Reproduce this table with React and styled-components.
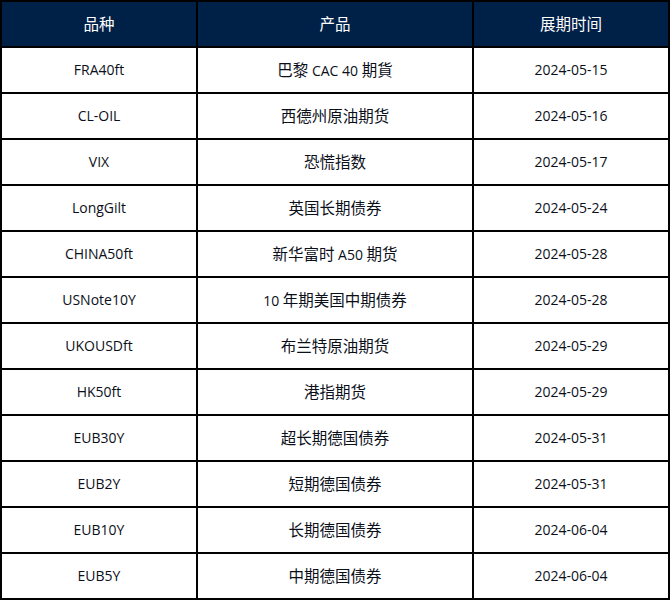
import styled, {createGlobalStyle} from "styled-components";

const GlobalStyle = createGlobalStyle`
  html, body {
    margin: 0;
    padding: 0;
    background: #ffffff;
  }
  body {
    font-family: "Open Sans", "Noto Sans CJK SC", sans-serif;
  }
`

const Table = styled.table`
  width: 670px;
  border-collapse: collapse;
  table-layout: fixed;
  font-size: 14px;
`
const Head = styled.th`
  height: 44px;
  padding: 0;
  background-color: #002147;
  color: #ffffff;
  font-weight: 400;
  border: 2px solid #000;
  text-align: center;
  line-height: 20px;
`
const Cell = styled.td`
  height: 44px;
  padding: 0;
  color: #0b0f1a;
  border: 2px solid #000;
  text-align: center;
  line-height: 20px;
`
// chinese glyphs render a bit bigger than the latin text
const Han = styled.span`
  font-family: "Noto Sans CJK SC", sans-serif;
  font-size: 15.5px;
`

const Text = ({children}) => {
    const parts = children.split(/([\u4e00-\u9fff]+)/).filter(Boolean)
    return parts.map((p, i) =>
        /[\u4e00-\u9fff]/.test(p) ? <Han key={i}>{p}</Han> : <span key={i}>{p}</span>
    )
}

const rows = [
    ["FRA40ft", "巴黎 CAC 40 期貨", "2024-05-15"],
    ["CL-OIL", "西德州原油期货", "2024-05-16"],
    ["VIX", "恐慌指数", "2024-05-17"],
    ["LongGilt", "英国长期债券", "2024-05-24"],
    ["CHINA50ft", "新华富时 A50 期货", "2024-05-28"],
    ["USNote10Y", "10 年期美国中期债券", "2024-05-28"],
    ["UKOUSDft", "布兰特原油期货", "2024-05-29"],
    ["HK50ft", "港指期货", "2024-05-29"],
    ["EUB30Y", "超长期德国债券", "2024-05-31"],
    ["EUB2Y", "短期德国债券", "2024-05-31"],
    ["EUB10Y", "长期德国债券", "2024-06-04"],
    ["EUB5Y", "中期德国债券", "2024-06-04"],
]

const App = () => {
    return (
        <>
            <GlobalStyle/>
            <Table>
                <colgroup>
                    <col style={{width: 196}}/>
                    <col style={{width: 276}}/>
                    <col style={{width: 196}}/>
                </colgroup>
                <thead>
                <tr>
                    <Head><Text>品种</Text></Head>
                    <Head><Text>产品</Text></Head>
                    <Head><Text>展期时间</Text></Head>
                </tr>
                </thead>
                <tbody>
                {rows.map((r) => (
                    <tr key={r[0]}>
                        <Cell>{r[0]}</Cell>
                        <Cell><Text>{r[1]}</Text></Cell>
                        <Cell>{r[2]}</Cell>
                    </tr>
                ))}
                </tbody>
            </Table>
        </>
    )
}

export default App
